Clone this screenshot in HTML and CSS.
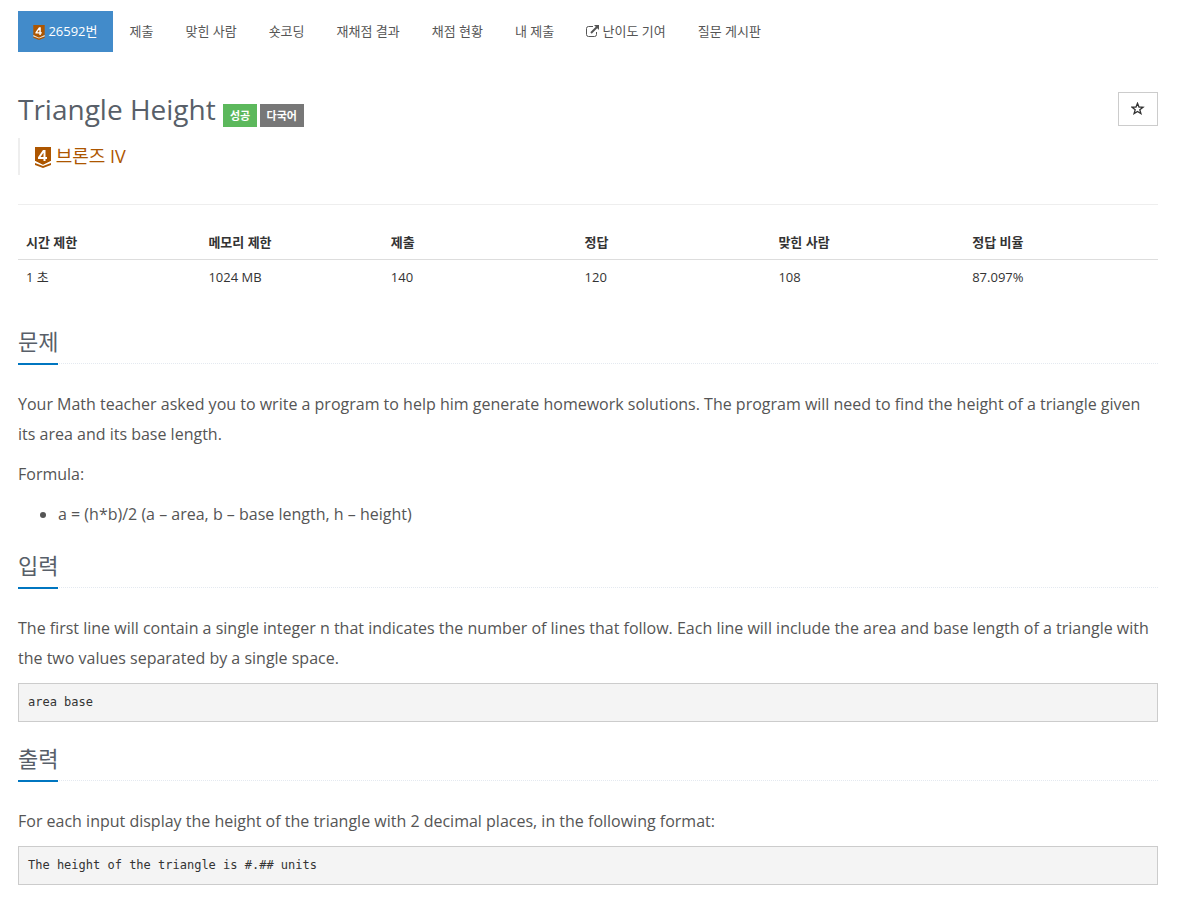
FILE: index.html
```html
<!DOCTYPE html>
<html lang="ko">
<head>
<meta charset="utf-8">
<meta name="viewport" content="width=device-width, initial-scale=1">
<title>26592번: Triangle Height</title>
<link rel="stylesheet" href="styles.css">
</head>
<body>
<main class="page">
  <nav class="tabs">
    <a class="tab tab-active" href="#"><svg class="tier tier-small" viewBox="0 0 16 21" aria-hidden="true"><path fill="#ad5600" d="M0 0h16v14l-8 4-8-4z"/><path fill="#ffdcb8" d="M0 14l8 4 8-4v2l-8 4-8-4z"/><path fill="#ad5600" d="M0 16l8 3 8-3v2l-8 3-8-3z"/><path fill="none" stroke="#fff" stroke-width="2" d="M9.500 14V4H8.500L4 10.500v.5h8"/></svg> 26592번</a>
    <a class="tab" href="#">제출</a>
    <a class="tab" href="#">맞힌 사람</a>
    <a class="tab" href="#">숏코딩</a>
    <a class="tab" href="#">재채점 결과</a>
    <a class="tab" href="#">채점 현황</a>
    <a class="tab" href="#">내 제출</a>
    <a class="tab" href="#"><svg class="external" viewBox="0 0 13 12" aria-hidden="true"><path fill="none" stroke="currentColor" d="M7 1.500H2.500a2 2 0 0 0-2 2v6a2 2 0 0 0 2 2h6a2 2 0 0 0 2-2V7"/><path fill="none" stroke="currentColor" stroke-width="2" d="M5 8l6-6"/><path fill="currentColor" d="M8 0h5v5z"/></svg> 난이도 기여</a>
    <a class="tab" href="#">질문 게시판</a>
  </nav>

  <header class="problem-head">
    <div>
      <h1 class="title">Triangle Height <span class="label label-success">성공</span> <span class="label label-lang">다국어</span></h1>
      <blockquote class="tier-quote"><svg class="tier" viewBox="0 0 16 21" aria-hidden="true"><path fill="#ad5600" d="M0 0h16v14l-8 4-8-4z"/><path fill="#fff" d="M0 14l8 4 8-4v2l-8 4-8-4z"/><path fill="#ad5600" d="M0 16l8 3 8-3v2l-8 3-8-3z"/><path fill="none" stroke="#fff" stroke-width="2" d="M9.500 14V4H8.500L4 10.500v.5h8"/></svg> 브론즈 IV</blockquote>
    </div>
    <button class="favorite" type="button" aria-label="즐겨찾기"><svg class="star" viewBox="0 0 14 14" aria-hidden="true"><path fill="none" stroke="currentColor" stroke-width="1.300" d="M6.500 1.300l1.500 3.700 4 .2-3.200 2.500 1.100 3.900-3.400-2.200-3.400 2.200 1.100-3.900L1 5.200l4-.2z"/></svg></button>
  </header>

  <table class="info">
    <thead>
      <tr><th class="narrow">시간 제한</th><th class="narrow">메모리 제한</th><th>제출</th><th>정답</th><th>맞힌 사람</th><th>정답 비율</th></tr>
    </thead>
    <tbody>
      <tr><td>1 초</td><td>1024 MB</td><td>140</td><td>120</td><td>108</td><td>87.097%</td></tr>
    </tbody>
  </table>

  <section class="section">
    <div class="headline"><h2>문제</h2></div>
    <div class="text">
      <p>Your Math teacher asked you to write a program to help him generate homework solutions. The program will need to find the height of a triangle given its area and its base length.</p>
      <p>Formula:</p>
      <ul>
        <li>a = (h*b)/2 (a – area, b – base length, h – height)</li>
      </ul>
    </div>
  </section>

  <section class="section">
    <div class="headline"><h2>입력</h2></div>
    <div class="text">
      <p>The first line will contain a single integer n that indicates the number of lines that follow. Each line will include the area and base length of a triangle with the two values separated by a single space.</p>
      <pre>area base</pre>
    </div>
  </section>

  <section class="section">
    <div class="headline"><h2>출력</h2></div>
    <div class="text">
      <p>For each input display the height of the triangle with 2 decimal places, in the following format:</p>
      <pre>The height of the triangle is #.## units</pre>
    </div>
  </section>
</main>
</body>
</html>
```
FILE: styles.css
```css
* {
  box-sizing: border-box;
}

body {
  margin: 0;
  background: #fff;
  color: #333;
  font: 13px/21px "Open Sans", "Noto Sans CJK KR", sans-serif;
}

.page {
  padding: 11px 28px 15px 18px;
}

.tabs {
  display: flex;
  flex-wrap: wrap;
  gap: 2px;
}

.tab {
  padding: 10px 15px;
  color: #555;
  text-decoration: none;
}

.tab-active {
  background: #428bca;
  color: #fff;
}

.tier {
  width: 16px;
  height: 21px;
  vertical-align: -5px;
}

.tier-small {
  width: 12px;
  height: 15px;
  vertical-align: -4px;
}

.external {
  width: 13px;
  height: 12px;
  vertical-align: -1px;
}

.problem-head {
  display: flex;
  justify-content: space-between;
  align-items: flex-start;
  margin-top: 40px;
  padding-bottom: 29px;
  border-bottom: 1px solid #eee;
}

.title {
  margin: 0;
  color: #585f69;
  font-size: 28px;
  font-weight: 400;
  line-height: 34px;
}

.label {
  display: inline-block;
  padding: 4px 7px;
  color: #fff;
  font-size: 11px;
  font-weight: 700;
  line-height: 15px;
}

.label + .label {
  margin-left: -5px;
}

.label-success {
  background: #5cb85c;
}

.label-lang {
  background: #777;
}

.tier-quote {
  margin: 11px 0 0;
  padding: 6px 15px;
  border-left: 2px solid #eee;
  color: #ad5600;
  font-size: 18px;
  line-height: 25px;
}

.favorite {
  display: flex;
  align-items: center;
  justify-content: center;
  width: 40px;
  height: 34px;
  padding: 0;
  border: 1px solid #ccc;
  background: #fff;
  color: #333;
}

.star {
  width: 14px;
  height: 14px;
}

.info {
  width: 100%;
  margin-top: 20px;
  border-collapse: collapse;
  table-layout: fixed;
}

.info th,
.info td {
  padding: 8px;
  text-align: left;
  line-height: 18px;
}

.info th {
  border-bottom: 1px solid #ddd;
}

.narrow {
  width: 16%;
}

.section {
  margin-top: 31px;
}

.section + .section {
  margin-top: 20px;
}

.headline {
  border-bottom: 1px dotted #e4e9f0;
  margin-bottom: 25px;
}

.headline h2 {
  display: inline-block;
  margin: 0 0 -2px;
  padding-bottom: 5px;
  border-bottom: 2px solid #0076c0;
  color: #585f69;
  font-size: 22px;
  font-weight: 400;
  line-height: 33px;
}

.text {
  color: #555;
  font-size: 16px;
  line-height: 30px;
}

.text p,
.text ul {
  margin: 0 0 10px;
}

.text ul {
  padding-left: 40px;
}

.text pre {
  margin: 0;
  padding: 9px;
  border: 1px solid #ccc;
  background: #f4f4f4;
  color: #333;
  font: 12px/19px "DejaVu Sans Mono", monospace;
  white-space: pre-wrap;
}
```
